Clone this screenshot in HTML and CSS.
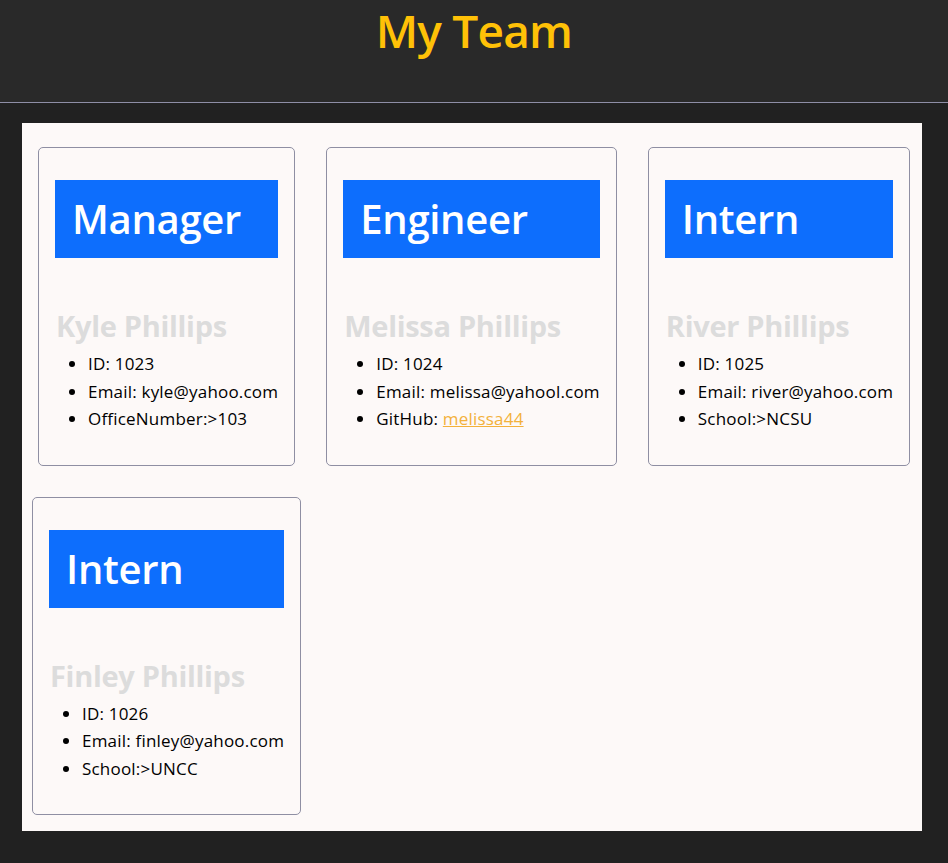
FILE: index.html
```html
<!DOCTYPE html>
<html lang="en">
<head>
<meta charset="utf-8">
<title>My Team</title>
<link rel="stylesheet" href="styles.css">
</head>
<body>
<header class="header">
  <h1 class="title">My Team</h1>
</header>
<main class="team">
  <div class="row row-first">
    <section class="card">
      <h2 class="role">Manager</h2>
      <h3 class="name">Kyle Phillips</h3>
      <ul class="info">
        <li>ID: 1023</li>
        <li>Email: kyle@yahoo.com</li>
        <li>OfficeNumber:&gt;103</li>
      </ul>
    </section>
    <section class="card">
      <h2 class="role">Engineer</h2>
      <h3 class="name">Melissa Phillips</h3>
      <ul class="info">
        <li>ID: 1024</li>
        <li>Email: melissa@yahool.com</li>
        <li>GitHub: <a class="link" href="#">melissa44</a></li>
      </ul>
    </section>
    <section class="card">
      <h2 class="role">Intern</h2>
      <h3 class="name">River Phillips</h3>
      <ul class="info">
        <li>ID: 1025</li>
        <li>Email: river@yahoo.com</li>
        <li>School:&gt;NCSU</li>
      </ul>
    </section>
  </div>
  <div class="row row-second">
    <section class="card">
      <h2 class="role">Intern</h2>
      <h3 class="name">Finley Phillips</h3>
      <ul class="info">
        <li>ID: 1026</li>
        <li>Email: finley@yahoo.com</li>
        <li>School:&gt;UNCC</li>
      </ul>
    </section>
  </div>
</main>
</body>
</html>
```

FILE: styles.css
```css
* { box-sizing: border-box; }

html, body {
  margin: 0;
  padding: 0;
  background: #212121;
  font-family: "Open Sans", "Noto Sans", sans-serif;
}

.header {
  height: 103px;
  background: #292929;
  border-bottom: 1px solid #8e8ea6;
  display: flex;
  justify-content: center;
  align-items: flex-start;
}

.title {
  margin: 0;
  color: #ffc107;
  font-size: 46px;
  font-weight: 600;
  line-height: 60px;
  letter-spacing: -0.8px;
}

.team {
  width: 900px;
  margin: 20px 22px 0 22px;
  background: #fdf9f8;
  padding: 24px 0 16px 0;
  display: flex;
  flex-direction: column;
  gap: 31px;
}

.row {
  display: flex;
  align-items: flex-start;
}

.row-first {
  padding-left: 16px;
  gap: 31px;
}

.row-second {
  padding-left: 10px;
}

.card {
  border: 1px solid #8f8fa3;
  border-radius: 5px;
  padding: 32px 16px 32px 16px;
  color: #000;
}

.role {
  margin: 0;
  background: #0d6efd;
  color: #fff;
  font-size: 40px;
  font-weight: 600;
  line-height: 54px;
  padding: 12px 17px;
  letter-spacing: -0.3px;
}

.name {
  margin: 48px 0 4px 1px;
  color: #dcdcdc;
  font-size: 29px;
  font-weight: 700;
  line-height: 40px;
  letter-spacing: -0.3px;
}

.info {
  margin: 0;
  padding-left: 33px;
  font-size: 17px;
  line-height: 27.5px;
  letter-spacing: 0.2px;
}

.link {
  color: #f3b13b;
}
```
